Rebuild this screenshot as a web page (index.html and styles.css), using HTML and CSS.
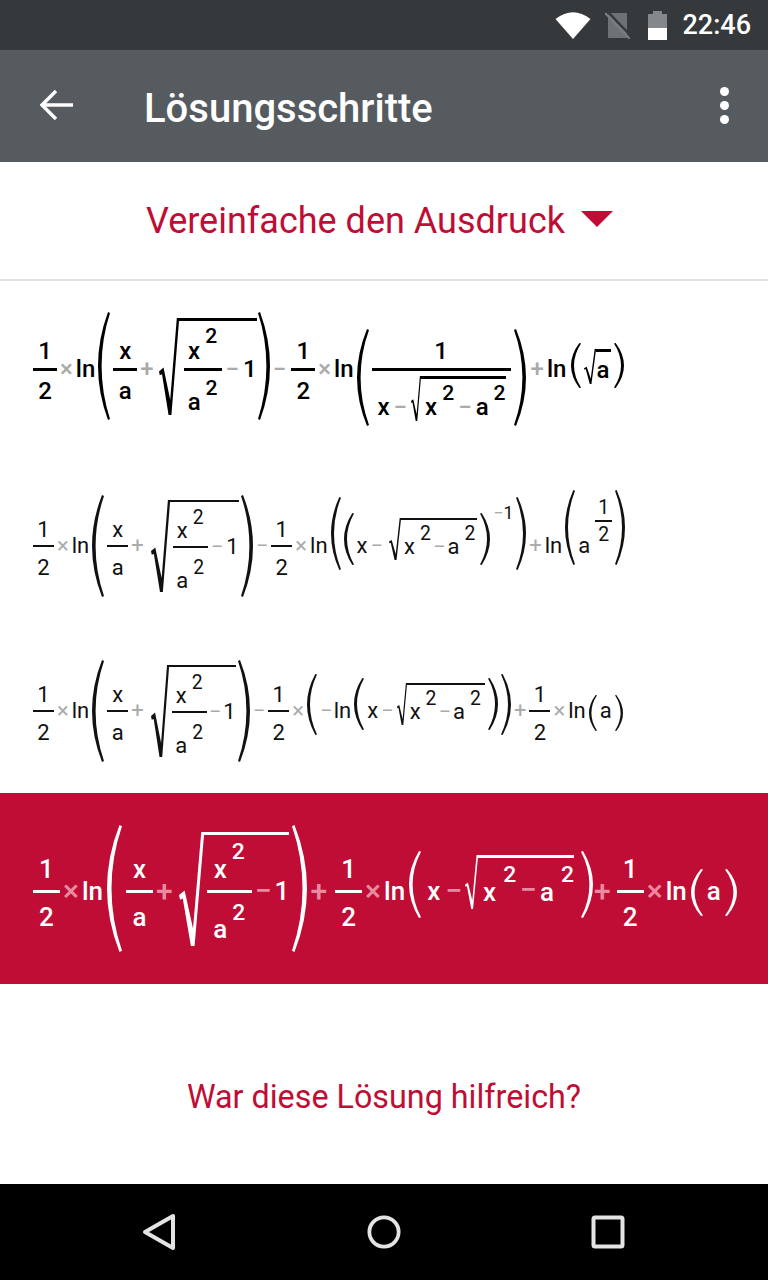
FILE: index.html
```html
<!DOCTYPE html>
<html lang="de">
<head>
  <meta charset="UTF-8" />
  <title>Lösungsschritte</title>
  <link rel="stylesheet" href="styles.css">
</head>
<body>
  <svg class="defs" width="0" height="0">
    <symbol id="paren" viewBox="0 0 12 100" preserveAspectRatio="none">
      <path d="M10 0 Q0 25 0 50 Q0 75 10 100 L12 99 Q3.6 75 3.6 50 Q3.6 25 12 1 Z" />
    </symbol>
    <symbol id="radical" viewBox="0 0 20 100" preserveAspectRatio="none">
      <path d="M0 55 L4.5 51 L11.2 84 L17.8 0 L20 0 L20 3 L12.4 100 L9.6 100 L3 58 L0.8 59 Z" />
    </symbol>
  </svg>

  <div class="statusbar">
    <svg class="ic-wifi" viewBox="0 0 36 28"><path d="M18 28 L0.5 8 Q18 -5.5 35.5 8 Z" /></svg>
    <svg class="ic-sim" viewBox="0 0 25 28">
      <path d="M3 2 H22 V27 H3 Z" />
      <path class="gap" d="M2 0 L25 24" />
      <path class="slash" d="M0 2 L25 28" />
    </svg>
    <svg class="ic-battery" viewBox="0 0 19 29">
      <path class="empty" d="M5 0 H14 V3 H19 V17 H0 V3 H5 Z" />
      <path d="M0 17 H19 V29 H0 Z" />
    </svg>
    <span class="clock">22:46</span>
  </div>

  <header class="toolbar">
    <svg class="ic-back" viewBox="0 0 33 32"><path d="M16 2 L2 16 L16 30 M2 16 H33" /></svg>
    <h1 class="title">Lösungsschritte</h1>
    <div class="kebab"><i></i><i></i><i></i></div>
  </header>

  <div class="subhead">
    <span>Vereinfache den Ausdruck</span>
    <svg class="ic-drop" viewBox="0 0 32 16"><path d="M0 0 H32 L16 16 Z" /></svg>
  </div>

  <main class="steps">
    <!-- schritt 1 -->
    <div class="step f1">
      <div class="frac"><span class="num">1</span><i class="bar"></i><span class="den">2</span></div>
      <span class="op">×</span><span>ln</span>
      <svg class="paren h108 mb6"><use href="#paren" /></svg>
      <div class="frac"><span class="num">x</span><i class="bar"></i><span class="den">a</span></div>
      <span class="op">+</span>
      <div class="sqrt w20 mb5">
        <svg class="rad"><use href="#radical" /></svg>
        <div class="radbody">
          <div class="frac wide"><span class="num pow">x<sup>2</sup></span><i class="bar"></i><span class="den pow">a<sup>2</sup></span></div>
          <span class="op">−</span><span>1</span>
        </div>
      </div>
      <svg class="paren flip h108 mb6"><use href="#paren" /></svg>
      <span class="op">−</span>
      <div class="frac ml2"><span class="num">1</span><i class="bar"></i><span class="den">2</span></div>
      <span class="op">×</span><span>ln</span>
      <svg class="paren h97 mt17"><use href="#paren" /></svg>
      <div class="frac">
        <span class="num">1</span><i class="bar"></i>
        <span class="den long">
          <span class="inl"><span class="lift">x</span><span class="op lift">−</span>
            <span class="sqrt w10"><svg class="rad"><use href="#radical" /></svg><span class="radbody tight"><span class="pow">x<sup>2</sup></span><span class="op">−</span><span class="pow">a<sup>2</sup></span></span></span>
          </span>
        </span>
      </div>
      <svg class="paren flip h97 mt17"><use href="#paren" /></svg>
      <span class="op ml2">+</span><span>ln</span>
      <svg class="paren h45 wn mb7 ml2"><use href="#paren" /></svg>
      <span class="sqrt w12 mb6"><svg class="rad"><use href="#radical" /></svg><span class="radbody tiny">a</span></span>
      <svg class="paren flip h45 wn mb7"><use href="#paren" /></svg>
    </div>

    <!-- schritt 2 -->
    <div class="step f2">
      <div class="frac"><span class="num">1</span><i class="bar"></i><span class="den">2</span></div>
      <span class="op">×</span><span>ln</span>
      <svg class="paren h102"><use href="#paren" /></svg>
      <div class="frac"><span class="num">x</span><i class="bar"></i><span class="den">a</span></div>
      <span class="op">+</span>
      <div class="sqrt w19">
        <svg class="rad"><use href="#radical" /></svg>
        <div class="radbody">
          <div class="frac wide"><span class="num pow">x<sup>2</sup></span><i class="bar"></i><span class="den pow">a<sup>2</sup></span></div>
          <span class="op">−</span><span>1</span>
        </div>
      </div>
      <svg class="paren flip h102"><use href="#paren" /></svg>
      <span class="op">−</span>
      <div class="frac"><span class="num">1</span><i class="bar"></i><span class="den">2</span></div>
      <span class="op">×</span><span>ln</span>
      <svg class="paren h73 wn mb25"><use href="#paren" /></svg>
      <svg class="paren h52 wn mb14"><use href="#paren" /></svg>
      <span>x</span><span class="op">−</span>
      <span class="sqrt w12 mb14 ml3"><svg class="rad"><use href="#radical" /></svg><span class="radbody tight"><span class="pow">x<sup>2</sup></span><span class="op">−</span><span class="pow">a<sup>2</sup></span></span></span>
      <svg class="paren flip h52 wn mb14"><use href="#paren" /></svg>
      <span class="inv"><span class="op">−</span>1</span>
      <svg class="paren flip h73 wn mb25"><use href="#paren" /></svg>
      <span class="op">+</span><span>ln</span>
      <svg class="paren h75 wn mb37"><use href="#paren" /></svg>
      <span>a</span>
      <div class="frac mini mb50"><span class="num">1</span><i class="bar"></i><span class="den">2</span></div>
      <svg class="paren flip h75 wn mb37"><use href="#paren" /></svg>
    </div>

    <!-- schritt 3 -->
    <div class="step f3">
      <div class="frac"><span class="num">1</span><i class="bar"></i><span class="den">2</span></div>
      <span class="op">×</span><span>ln</span>
      <svg class="paren h102"><use href="#paren" /></svg>
      <div class="frac"><span class="num">x</span><i class="bar"></i><span class="den">a</span></div>
      <span class="op">+</span>
      <div class="sqrt w18">
        <svg class="rad"><use href="#radical" /></svg>
        <div class="radbody">
          <div class="frac wide"><span class="num pow">x<sup>2</sup></span><i class="bar"></i><span class="den pow">a<sup>2</sup></span></div>
          <span class="op">−</span><span>1</span>
        </div>
      </div>
      <svg class="paren flip h102"><use href="#paren" /></svg>
      <span class="op">−</span>
      <div class="frac"><span class="num">1</span><i class="bar"></i><span class="den">2</span></div>
      <span class="op">×</span>
      <svg class="paren h61 wn mb14"><use href="#paren" /></svg>
      <span class="op tg">−</span><span>ln</span>
      <svg class="paren h52 wn mb14"><use href="#paren" /></svg>
      <span>x</span><span class="op">−</span>
      <span class="sqrt w10 mb14"><svg class="rad"><use href="#radical" /></svg><span class="radbody tight"><span class="pow">x<sup>2</sup></span><span class="op">−</span><span class="pow">a<sup>2</sup></span></span></span>
      <svg class="paren flip h52 wn mb14"><use href="#paren" /></svg>
      <svg class="paren flip h61 wn mb14"><use href="#paren" /></svg>
      <span class="op">+</span>
      <div class="frac"><span class="num">1</span><i class="bar"></i><span class="den">2</span></div>
      <span class="op">×</span><span>ln</span>
      <svg class="paren h36 ws mt3"><use href="#paren" /></svg>
      <span>a</span>
      <svg class="paren flip h36 ws mt3"><use href="#paren" /></svg>
    </div>

    <!-- ergebnis -->
    <div class="step f4">
      <div class="frac"><span class="num">1</span><i class="bar"></i><span class="den">2</span></div>
      <span class="op">×</span><span>ln</span>
      <svg class="paren wb h127 mb6"><use href="#paren" /></svg>
      <div class="frac"><span class="num">x</span><i class="bar"></i><span class="den">a</span></div>
      <span class="op">+</span>
      <div class="sqrt w25 mb4 ml3">
        <svg class="rad"><use href="#radical" /></svg>
        <div class="radbody">
          <div class="frac wide"><span class="num pow">x<sup>2</sup></span><i class="bar"></i><span class="den pow">a<sup>2</sup></span></div>
          <span class="op">−</span><span>1</span>
        </div>
      </div>
      <svg class="paren wb flip h127 mb6"><use href="#paren" /></svg>
      <span class="op">+</span>
      <div class="frac ml5"><span class="num">1</span><i class="bar"></i><span class="den">2</span></div>
      <span class="op">×</span><span>ln</span>
      <svg class="paren h67 mb14"><use href="#paren" /></svg>
      <span class="ml2 mr2">x</span><span class="op">−</span>
      <span class="sqrt w13 mb18"><svg class="rad"><use href="#radical" /></svg><span class="radbody tight"><span class="pow">x<sup>2</sup></span><span class="op">−</span><span class="pow">a<sup>2</sup></span></span></span>
      <svg class="paren flip h67 mb14 ml3"><use href="#paren" /></svg>
      <span class="op pull">+</span>
      <div class="frac ml3"><span class="num">1</span><i class="bar"></i><span class="den">2</span></div>
      <span class="op">×</span><span>ln</span>
      <svg class="paren h47 mt3"><use href="#paren" /></svg>
      <span>a</span>
      <svg class="paren flip h47 mt3"><use href="#paren" /></svg>
    </div>
  </main>

  <div class="feedback">War diese Lösung hilfreich?</div>

  <nav class="navbar">
    <svg class="ic-nav nav-back" viewBox="0 0 34 38"><path d="M31 3 V35 L3 19 Z" /></svg>
    <svg class="ic-nav" viewBox="0 0 36 36"><circle cx="18" cy="18" r="15.5" /></svg>
    <svg class="ic-nav" viewBox="0 0 34 34"><rect x="2.5" y="2.5" width="29" height="29" rx="1.5" /></svg>
  </nav>
</body>
</html>
```

FILE: styles.css
```css
* {
  box-sizing: border-box;
}

body {
  margin: 0;
  width: 768px;
  height: 1280px;
  display: flex;
  flex-direction: column;
  background: #fff;
  font-family: Roboto, sans-serif;
  color: #111;
  overflow: hidden;
}

.defs {
  display: block;
  height: 0;
}

/* statusleiste */
.statusbar {
  height: 50px;
  flex: none;
  background: #36393c;
  display: flex;
  align-items: center;
  justify-content: flex-end;
  padding-right: 17px;
  color: #fff;
}

.statusbar svg {
  fill: #fff;
  flex: none;
}

.ic-wifi {
  width: 36px;
  height: 28px;
  margin-right: 14px;
}

.ic-sim {
  width: 25px;
  height: 28px;
  margin-right: 18px;
}

.ic-sim path {
  fill: #6f7275;
}

.ic-sim .gap {
  fill: none;
  stroke: #36393c;
  stroke-width: 2.5;
}

.ic-sim .slash {
  fill: none;
  stroke: #7b7e81;
  stroke-width: 2;
}

.ic-battery {
  width: 19px;
  height: 29px;
  margin-right: 15px;
}

.ic-battery .empty {
  fill: #85888b;
}

.clock {
  font-size: 27px;
  font-weight: 500;
}

/* toolbar */
.toolbar {
  height: 112px;
  flex: none;
  background: #565b5f;
  display: flex;
  align-items: center;
  padding: 0 39px 0 40px;
  color: #fff;
}

.ic-back {
  width: 33px;
  height: 32px;
  fill: none;
  stroke: #fff;
  stroke-width: 3.4;
  margin-right: 71px;
  margin-top: -2px;
}

.title {
  flex: 1;
  margin: 4px 0 0;
  font-size: 40px;
  font-weight: 500;
}

.kebab {
  display: flex;
  flex-direction: column;
  gap: 5px;
  margin-top: -2px;
}

.kebab i {
  width: 9px;
  height: 9px;
  border-radius: 50%;
  background: #fff;
}

/* untertitel */
.subhead {
  height: 119px;
  flex: none;
  border-bottom: 2px solid #e2e2e2;
  display: flex;
  align-items: center;
  justify-content: center;
  gap: 16px;
  padding-right: 9px;
  color: #bf0d35;
  font-size: 36px;
}

.ic-drop {
  width: 32px;
  height: 16px;
  fill: #bf0d35;
  margin-bottom: 4px;
}

/* rechenschritte */
.steps {
  flex: none;
}

.step {
  display: flex;
  align-items: center;
  gap: 3px;
  padding-left: 33px;
  white-space: nowrap;
  line-height: 1;
}

.op {
  color: #aaa;
}

.tg {
  margin-right: -2px;
}

.frac {
  display: grid;
  grid-template-rows: 1fr auto 1fr;
  justify-items: center;
  min-width: 24px;
}

.frac .num {
  align-self: end;
  padding-bottom: 5px;
}

.frac .den {
  align-self: start;
  padding-top: 8px;
}

.frac .den.pow {
  padding-top: 6px;
}

.frac .den.long {
  padding: 5px 5px 0 6px;
}

.bar {
  width: 100%;
  height: 3px;
  background: currentColor;
}

.pow {
  display: inline-flex;
  align-items: flex-end;
}

.pow sup {
  font-size: 0.88em;
  line-height: 1;
  margin: 0 0 0.78em 5px;
  vertical-align: baseline;
}

.inl {
  display: inline-flex;
  align-items: flex-end;
  gap: 4px;
}

.lift {
  margin-bottom: 2px;
}

/* klammern */
.paren {
  width: 12px;
  fill: currentColor;
  flex: none;
}

.paren.flip {
  transform: scaleX(-1);
}

.paren.ws {
  width: 8px;
}

.paren.wn {
  width: 10px;
}

.paren.wb {
  width: 15px;
}

.h36 { height: 36px; }
.h45 { height: 45px; }
.h47 { height: 47px; }
.h52 { height: 52px; }
.h61 { height: 61px; }
.h67 { height: 67px; }
.h73 { height: 73px; }
.h75 { height: 75px; }
.h97 { height: 97px; }
.h102 { height: 102px; }
.h108 { height: 108px; }
.h127 { height: 127px; }

.mb4 { margin-bottom: 4px; }
.mb5 { margin-bottom: 5px; }
.mb6 { margin-bottom: 6px; }
.mb7 { margin-bottom: 7px; }
.mb14 { margin-bottom: 14px; }
.mb18 { margin-bottom: 18px; }
.mb25 { margin-bottom: 25px; }
.mb37 { margin-bottom: 37px; }
.mb50 { margin-bottom: 50px; }
.mt3 { margin-top: 3px; }
.mt17 { margin-top: 17px; }
.ml2 { margin-left: 2px; }
.ml3 { margin-left: 3px; }
.ml5 { margin-left: 5px; }
.mr2 { margin-right: 2px; }

/* wurzel: das zeichen liegt neben dem inhalt und waechst mit ihm */
.sqrt {
  position: relative;
  display: inline-flex;
  padding-left: var(--rad);
}

.rad {
  position: absolute;
  left: 0;
  top: 0;
  width: var(--rad);
  height: 100%;
  fill: currentColor;
}

.w10 { --rad: 10px; }
.w12 { --rad: 12px; }
.w13 { --rad: 13px; }
.w18 { --rad: 18px; margin-left: 4px; }
.w19 { --rad: 19px; margin-left: 4px; }
.w20 { --rad: 20px; margin-left: 2px; }
.w25 { --rad: 25px; }

.radbody {
  display: inline-flex;
  align-items: center;
  gap: 4px;
  border-top: 3px solid currentColor;
  padding: 3px 0 1px 5px;
  margin-right: -2px;
}

.radbody.tight {
  align-items: flex-end;
  gap: 4px;
  padding: 3px 0 2px 4px;
  margin-right: 0;
}

.radbody.tiny {
  padding: 6px 2px 2px 0;
  margin-right: 0;
}

.f1 {
  height: 176px;
  font-size: 24px;
  font-weight: 500;
  color: #000;
}

.f1 .wide {
  min-width: 38px;
}

.f2,
.f3 {
  font-size: 22px;
}

.f2 {
  height: 172px;
  padding-top: 6px;
}

.f3 {
  height: 164px;
}

.f2 .frac,
.f3 .frac {
  min-width: 21px;
}

.f2 .frac .num,
.f3 .frac .num {
  padding-bottom: 4px;
}

.f2 .frac .den,
.f3 .frac .den {
  padding-top: 10px;
}

.f2 .bar,
.f3 .bar {
  height: 2px;
}

.f2 .wide,
.f3 .wide {
  min-width: 35px;
}

.f2 .radbody,
.f3 .radbody {
  border-top-width: 2px;
  padding: 0 0 0 3px;
  gap: 3px;
  margin-right: -1px;
}

.f3 .radbody {
  gap: 2px;
}

.f2 .radbody.tight,
.f3 .radbody.tight {
  gap: 2px;
  margin-right: 0;
  padding: 4px 2px 2.5px 3px;
}

.f3 .radbody.tight {
  padding-right: 4px;
}

.f4 {
  height: 191px;
  gap: 4px;
  padding-top: 5px;
  background: #bf0d35;
  color: #fff;
  font-size: 26px;
  font-weight: 500;
}

.f4 .op {
  color: #e88ba0;
  font-size: 30px;
  margin: 0 -1px;
}

.f4 .op.pull {
  margin-left: -3px;
}

.f4 .frac {
  min-width: 27px;
}

.f4 .frac .num {
  padding-bottom: 8px;
}

.f4 .frac .den {
  padding-top: 11px;
}

.f4 .frac .den.pow {
  padding-top: 9px;
}

.f4 .pow sup {
  margin-bottom: 18px;
}

.f4 .wide {
  min-width: 45px;
}

.f4 .radbody {
  padding: 5px 0 4px 3px;
  margin-right: -1px;
}

.f4 .radbody.tight {
  gap: 3.5px;
  margin-right: 0;
  padding: 6px 0 4px 5px;
}

.f4 .radbody.tight .op {
  margin: 0;
}

.f4 .radbody.tight .pow sup {
  margin-left: 7px;
}

.inv {
  display: inline-flex;
  font-size: 0.8em;
  margin-bottom: 64px;
}

.frac.mini {
  font-size: 0.88em;
  min-width: 17px;
  margin-left: 2px;
}

.f2 .frac.mini .num {
  padding-bottom: 3px;
}

.f2 .frac.mini .den {
  padding-top: 3px;
}

.feedback {
  flex: 1;
  display: flex;
  align-items: center;
  justify-content: center;
  padding-top: 25px;
  color: #bf0d35;
  font-size: 32.3px;
}

/* android navigation */
.navbar {
  height: 96px;
  flex: none;
  background: #000;
  display: flex;
  align-items: center;
  padding: 0 143px 0 142px;
  justify-content: space-between;
}

.ic-nav {
  width: 34px;
  height: 36px;
  fill: none;
  stroke: #e4e4e4;
  stroke-width: 4;
  stroke-linejoin: round;
}

.nav-back {
  height: 38px;
}
```
